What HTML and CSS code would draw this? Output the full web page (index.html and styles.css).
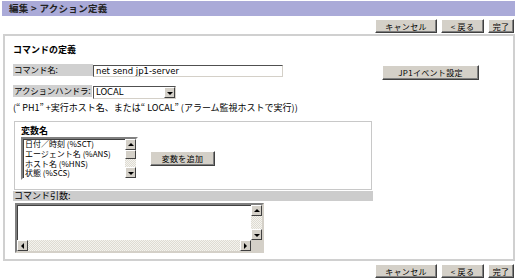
FILE: index.html
```html
<!DOCTYPE html>
<html lang="ja">
<head>
    <meta charset="UTF-8">
    <title>アクション定義</title>
    <link rel="stylesheet" href="styles.css">
</head>
<body>
<div class="titlebar">編集&nbsp;&gt;&nbsp;アクション定義</div>
<div class="toolbar">
    <button class="btn btn-cancel">キャンセル</button>
    <button class="btn btn-back">&lt; 戻る</button>
    <button class="btn btn-done">完了</button>
</div>
<div class="panel">
    <div class="section-title">コマンドの定義</div>
    <div class="form-row row-name">
        <span class="field-label">コマンド名:</span>
        <input class="text-input" type="text" value="net send jp1-server">
        <button class="btn btn-jp1">JP1イベント設定</button>
    </div>
    <div class="form-row row-handler">
        <span class="field-label">アクションハンドラ:</span>
        <div class="select">
            <span class="select-value">LOCAL</span>
            <span class="arrow-btn"><span class="tri tri-down"></span></span>
        </div>
    </div>
    <div class="note">(“ PH1” +実行ホスト名、または“ LOCAL” (アラーム監視ホストで実行))</div>

    <div class="var-box">
        <div class="var-title">変数名</div>
        <div class="var-row">
            <div class="listbox">
                <div class="list-items">
                    <div>日付／時刻 (%SCT)</div>
                    <div>エージェント名 (%ANS)</div>
                    <div>ホスト名 (%HNS)</div>
                    <div>状態 (%SCS)</div>
                </div>
                <div class="vscroll">
                    <span class="arrow-btn"><span class="tri tri-up"></span></span>
                    <span class="thumb"></span>
                    <span class="track"></span>
                    <span class="arrow-btn"><span class="tri tri-down"></span></span>
                </div>
            </div>
            <button class="btn btn-add">変数を追加</button>
        </div>
    </div>

    <div class="args-label">コマンド引数:</div>
    <div class="args-area">
        <div class="args-main">
            <div class="args-text"></div>
            <div class="vscroll">
                <span class="arrow-btn"><span class="tri tri-up"></span></span>
                <span class="track"></span>
                <span class="arrow-btn"><span class="tri tri-down"></span></span>
            </div>
        </div>
        <div class="hscroll">
            <span class="arrow-btn"><span class="tri tri-left"></span></span>
            <span class="track"></span>
            <span class="arrow-btn"><span class="tri tri-right"></span></span>
            <span class="corner"></span>
        </div>
    </div>
</div>
<div class="toolbar">
    <button class="btn btn-cancel">キャンセル</button>
    <button class="btn btn-back">&lt; 戻る</button>
    <button class="btn btn-done">完了</button>
</div>
</body>
</html>
```

FILE: styles.css
```css
body {
    margin: 0;
    font-family: "Noto Sans CJK JP", "DejaVu Sans", sans-serif;
    font-size: 9px;
    color: #000;
    background: #fff;
}

.titlebar {
    margin: 1px 2px 0 2px;
    height: 15px;
    line-height: 15px;
    padding-left: 7px;
    background: #aaaad8;
    font-size: 9.5px;
    font-weight: bold;
    letter-spacing: 0.3px;
    color: #222;
}

.toolbar {
    display: flex;
    justify-content: flex-end;
    gap: 4px;
    padding: 3px 3px 1px 0;
}

.btn {
    box-sizing: border-box;
    height: 14px;
    padding: 0;
    margin: 0;
    font-family: "Noto Sans CJK JP", sans-serif;
    font-size: 8px;
    line-height: 11px;
    letter-spacing: 0.3px;
    color: #000;
    background: #d4d0c8;
    border: 1px solid;
    border-color: #fff #404040 #404040 #fff;
    box-shadow: inset -1px -1px #808080;
    white-space: nowrap;
}

.btn-cancel {
    width: 62px;
}

.btn-back {
    width: 43px;
}

.btn-done {
    width: 26px;
}

.panel {
    box-sizing: border-box;
    margin: 0 2px 0 3px;
    height: 227px;
    border: 2px solid #d0d0d0;
    padding: 8px 0 0 8px;
}

.section-title {
    font-weight: bold;
    line-height: 12px;
    height: 12px;
}

.form-row {
    display: flex;
    align-items: flex-start;
}

.row-name {
    margin-top: 8px;
}

.row-handler {
    margin-top: 5px;
}

.field-label {
    box-sizing: border-box;
    width: 80px;
    height: 12px;
    line-height: 11px;
    padding-left: 1px;
    font-size: 8.5px;
    letter-spacing: -0.2px;
    white-space: nowrap;
    background: #d0d0d0;
}

.row-handler .field-label {
    width: 79px;
    margin-right: 1px;
}

.text-input {
    box-sizing: border-box;
    width: 190px;
    height: 12px;
    margin: 1px 0 0 0;
    padding: 0 2px;
    font-family: "DejaVu Sans", sans-serif;
    font-size: 8.5px;
    border: 1px solid;
    border-color: #505050 #d4d0c8 #d4d0c8 #505050;
    outline: none;
}

.btn-jp1 {
    width: 97px;
    height: 15px;
    margin: 1px 0 0 99px;
}

.select {
    box-sizing: border-box;
    display: flex;
    width: 83px;
    height: 13px;
    margin-top: 1px;
    border: 1px solid;
    border-color: #505050 #d4d0c8 #d4d0c8 #505050;
    background: #fff;
}

.select-value {
    flex: 1;
    padding-left: 2px;
    font-family: "DejaVu Sans", sans-serif;
    font-size: 8.5px;
    line-height: 11px;
}

.arrow-btn {
    box-sizing: border-box;
    display: flex;
    align-items: center;
    justify-content: center;
    width: 11px;
    height: 11px;
    flex: none;
    background: #d4d0c8;
    border: 1px solid;
    border-color: #fff #404040 #404040 #fff;
}

.tri {
    width: 0;
    height: 0;
    border: 3px solid transparent;
}

.tri-down {
    border-top-color: #000;
    border-bottom-width: 0;
    margin-top: 1px;
}

.tri-up {
    border-bottom-color: #000;
    border-top-width: 0;
}

.tri-left {
    border-right-color: #000;
    border-left-width: 0;
}

.tri-right {
    border-left-color: #000;
    border-right-width: 0;
}

.note {
    margin-top: 3px;
    line-height: 11px;
    white-space: nowrap;
}

.var-box {
    box-sizing: border-box;
    width: 358px;
    height: 69px;
    margin: 8px 0 0 1px;
    border: 1px solid #c8c8c8;
    padding: 4px 0 0 6px;
}

.var-title {
    font-weight: bold;
    line-height: 10px;
}

.var-row {
    display: flex;
    align-items: center;
    margin-top: 1px;
}

.listbox {
    box-sizing: border-box;
    display: flex;
    width: 117px;
    height: 43px;
    border: 2px solid;
    border-color: #808080 #fff #fff #808080;
    box-shadow: inset 1px 1px #404040;
    background: #fff;
}

.list-items {
    flex: 1;
    padding: 0 0 0 2px;
    font-size: 8px;
    line-height: 9.75px;
    white-space: nowrap;
}

.vscroll {
    display: flex;
    flex-direction: column;
    width: 11px;
}

.thumb {
    box-sizing: border-box;
    height: 9px;
    background: #d4d0c8;
    border: 1px solid;
    border-color: #fff #404040 #404040 #fff;
}

.track {
    flex: 1;
    background-color: #f4f3ee;
    background-image: repeating-conic-gradient(#dedbd2 0 25%, #f4f3ee 0 50%);
    background-size: 2px 2px;
}

.btn-add {
    width: 65px;
    height: 15px;
    margin-left: 12px;
}

.args-label {
    width: 359px;
    height: 10px;
    line-height: 10px;
    margin-top: 1px;
    padding-left: 1px;
    background: #cccccc;
}

.args-area {
    box-sizing: border-box;
    width: 249px;
    height: 50px;
    margin: 2px 0 0 2px;
    display: flex;
    flex-direction: column;
    border: 2px solid;
    border-color: #808080 #d4d0c8 #d4d0c8 #808080;
    box-shadow: inset 1px 1px #404040;
    background: #fff;
}

.args-main {
    flex: 1;
    display: flex;
}

.args-text {
    flex: 1;
}

.hscroll {
    display: flex;
    height: 11px;
}

.corner {
    width: 11px;
    background: #d4d0c8;
}
```
